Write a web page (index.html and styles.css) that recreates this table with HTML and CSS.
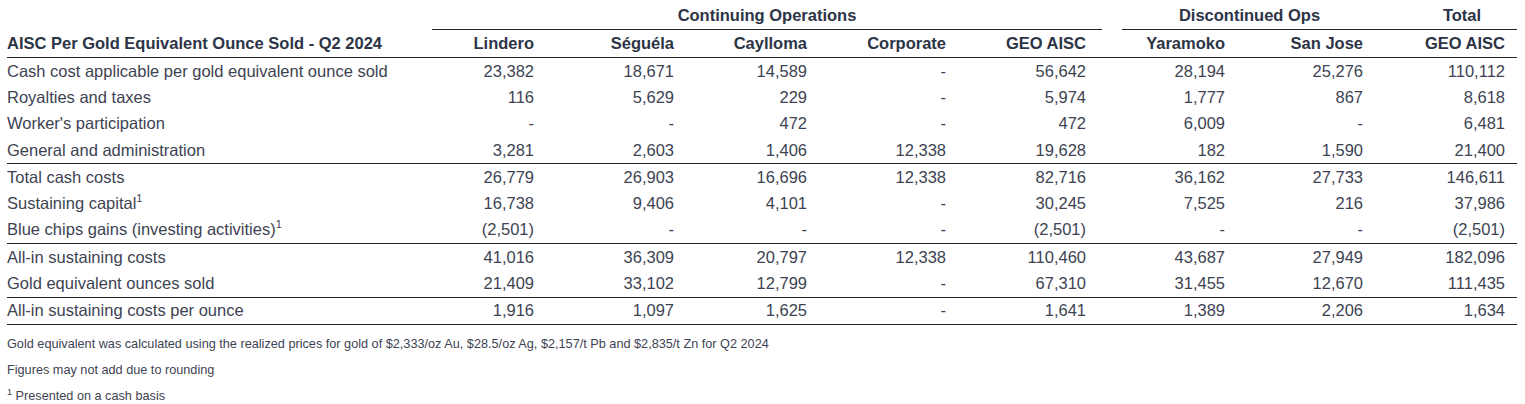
FILE: index.html
```html
<!DOCTYPE html>
<html lang="en">
<head>
<meta charset="utf-8">
<title>AISC Per Gold Equivalent Ounce Sold - Q2 2024</title>
<link rel="stylesheet" href="styles.css">
</head>
<body>
<div class="page">
<table class="aisc">
  <colgroup>
    <col class="c-label">
    <col class="c-lin">
    <col class="c-seg">
    <col class="c-cay">
    <col class="c-cor">
    <col class="c-geo">
    <col class="c-yar">
    <col class="c-sj">
    <col class="c-tot">
  </colgroup>
  <thead>
    <tr class="group-row">
      <th></th>
      <th colspan="5" class="grp"><div class="grp-line">Continuing Operations</div></th>
      <th colspan="2" class="grp"><div class="grp-line gap-left">Discontinued Ops</div></th>
      <th class="grp"><div class="grp-line total-line">Total</div></th>
    </tr>
    <tr class="head-row">
      <th class="label">AISC Per Gold Equivalent Ounce Sold - Q2 2024</th>
      <th>Lindero</th>
      <th>Séguéla</th>
      <th>Caylloma</th>
      <th>Corporate</th>
      <th class="geo">GEO AISC</th>
      <th>Yaramoko</th>
      <th>San Jose</th>
      <th class="tot">GEO AISC</th>
    </tr>
  </thead>
  <tbody>
    <tr>
      <td class="label">Cash cost applicable per gold equivalent ounce sold</td>
      <td>23,382</td><td>18,671</td><td>14,589</td><td>-</td><td class="geo">56,642</td><td>28,194</td><td>25,276</td><td class="tot">110,112</td>
    </tr>
    <tr>
      <td class="label">Royalties and taxes</td>
      <td>116</td><td>5,629</td><td>229</td><td>-</td><td class="geo">5,974</td><td>1,777</td><td>867</td><td class="tot">8,618</td>
    </tr>
    <tr>
      <td class="label">Worker's participation</td>
      <td>-</td><td>-</td><td>472</td><td>-</td><td class="geo">472</td><td>6,009</td><td>-</td><td class="tot">6,481</td>
    </tr>
    <tr class="ruled">
      <td class="label">General and administration</td>
      <td>3,281</td><td>2,603</td><td>1,406</td><td>12,338</td><td class="geo">19,628</td><td>182</td><td>1,590</td><td class="tot">21,400</td>
    </tr>
    <tr>
      <td class="label">Total cash costs</td>
      <td>26,779</td><td>26,903</td><td>16,696</td><td>12,338</td><td class="geo">82,716</td><td>36,162</td><td>27,733</td><td class="tot">146,611</td>
    </tr>
    <tr>
      <td class="label">Sustaining capital<sup>1</sup></td>
      <td>16,738</td><td>9,406</td><td>4,101</td><td>-</td><td class="geo">30,245</td><td>7,525</td><td>216</td><td class="tot">37,986</td>
    </tr>
    <tr class="ruled">
      <td class="label">Blue chips gains (investing activities)<sup>1</sup></td>
      <td>(2,501)</td><td>-</td><td>-</td><td>-</td><td class="geo">(2,501)</td><td>-</td><td>-</td><td class="tot">(2,501)</td>
    </tr>
    <tr>
      <td class="label">All-in sustaining costs</td>
      <td>41,016</td><td>36,309</td><td>20,797</td><td>12,338</td><td class="geo">110,460</td><td>43,687</td><td>27,949</td><td class="tot">182,096</td>
    </tr>
    <tr class="ruled">
      <td class="label">Gold equivalent ounces sold</td>
      <td>21,409</td><td>33,102</td><td>12,799</td><td>-</td><td class="geo">67,310</td><td>31,455</td><td>12,670</td><td class="tot">111,435</td>
    </tr>
    <tr class="ruled">
      <td class="label">All-in sustaining costs per ounce</td>
      <td>1,916</td><td>1,097</td><td>1,625</td><td>-</td><td class="geo">1,641</td><td>1,389</td><td>2,206</td><td class="tot">1,634</td>
    </tr>
  </tbody>
</table>
<div class="notes">
  <p>Gold equivalent was calculated using the realized prices for gold of $2,333/oz Au, $28.5/oz Ag, $2,157/t Pb and $2,835/t Zn for Q2 2024</p>
  <p>Figures may not add due to rounding</p>
  <p><sup>1</sup> Presented on a cash basis</p>
</div>
</div>
</body>
</html>
```
FILE: styles.css
```css
html, body {
  margin: 0;
  padding: 0;
  background: #ffffff;
}
.page {
  padding: 0 8px 0 7px;
  font-family: "Liberation Sans", Arial, sans-serif;
  color: #3d4352;
}
.aisc {
  border-collapse: collapse;
  table-layout: fixed;
  width: 1510px;
  font-size: 16.5px;
}
.c-label { width: 425px; }
.c-lin { width: 116px; }
.c-seg { width: 140px; }
.c-cay { width: 133px; }
.c-cor { width: 139px; }
.c-geo { width: 142px; }
.c-yar { width: 137px; }
.c-sj { width: 138px; }
.c-tot { width: 140px; }

.aisc th {
  font-weight: bold;
  color: #2c3446;
  padding: 0 14px 0 0;
  text-align: right;
  white-space: nowrap;
}
.aisc th.label,
.aisc td.label {
  text-align: left;
  padding-left: 0;
}
.group-row th {
  height: 30px;
  padding: 0;
  vertical-align: bottom;
}
.grp-line {
  text-align: center;
  border-bottom: 1px solid #1f2229;
  padding: 0 0 4px 0;
  line-height: 19px;
}
.gap-left {
  margin-left: 20px;
}
.total-line {
  padding-left: 30px;
}
.head-row th {
  height: 27px;
  border-bottom: 1px solid #1f2229;
  vertical-align: middle;
  line-height: 19px;
  padding-top: 0;
}
.aisc td {
  height: 26.3px;
  padding: 0 14px 0 0;
  text-align: right;
  white-space: nowrap;
  line-height: 19px;
  vertical-align: middle;
}
.aisc .geo { padding-right: 16px; }
.aisc .tot { padding-right: 12px; }
.aisc tr.ruled td {
  border-bottom: 1px solid #1f2229;
}
.aisc sup {
  font-size: 11px;
  line-height: 0;
  vertical-align: 7px;
}
.notes {
  padding-top: 7px;
  font-size: 12.7px;
  color: #3d4352;
}
.notes p {
  margin: 0;
  height: 26px;
  line-height: 24px;
}
.notes sup {
  font-size: 9px;
  line-height: 0;
  vertical-align: 5px;
}
```
